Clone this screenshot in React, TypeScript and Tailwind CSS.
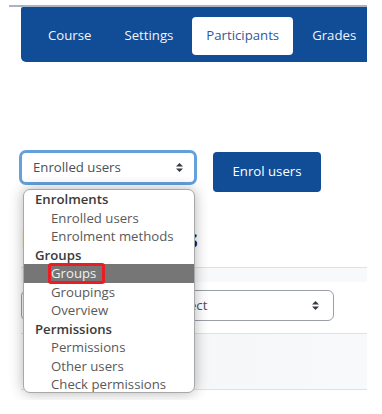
const BLUE = 'bg-[#114c97]';

function UpDown({ className = '' }: { className?: string }) {
  return (
    <svg width="7" height="9" viewBox="0 0 7 9" className={className}>
      <path d="M0 3.6 L3.5 0 L7 3.6 Z" fill="#343a40" />
      <path d="M0 5.4 L3.5 9 L7 5.4 Z" fill="#343a40" />
    </svg>
  );
}

const tabs = ['Course', 'Settings', 'Participants', 'Grades'];

type Item = { label: string; group?: boolean; active?: boolean };

const menu: Item[] = [
  { label: 'Enrolments', group: true },
  { label: 'Enrolled users' },
  { label: 'Enrolment methods' },
  { label: 'Groups', group: true },
  { label: 'Groups', active: true },
  { label: 'Groupings' },
  { label: 'Overview' },
  { label: 'Permissions', group: true },
  { label: 'Permissions' },
  { label: 'Other users' },
  { label: 'Check permissions' },
];

export default function App() {
  return (
    <div
      className="w-[382px] h-[414px] bg-white overflow-hidden"
      style={{ fontFamily: '"Open Sans", "Liberation Sans", sans-serif' }}
    >
      <div className="ml-[9px] mt-[5px] w-[358px] h-[395px] relative overflow-hidden border-t-2 border-[#a9b3c1]">
        {/* Nav */}
        <div className={`ml-[12px] h-[55px] ${BLUE} rounded-bl-[5px] rounded-tl-[2px] flex items-center pl-[13px] pt-[2px] gap-[5px]`}>
          {tabs.map((t) => (
            <div
              key={t}
              className={
                t === 'Participants'
                  ? 'h-[38px] px-[14px] flex items-center rounded-[4px] bg-white text-[#2f5a96] text-[13.2px]'
                  : 'h-[38px] px-[14px] flex items-center text-[#f1f4f9] text-[13.2px]'
              }
            >
              {t}
            </div>
          ))}
        </div>

        {/* Select + button */}
        <div className="flex items-start mt-[88px] ml-[10px]">
          <div className="w-[178px] h-[35px] border-[3px] border-[#64a1dc] rounded-[7px] flex items-center justify-between pl-[11px] pr-[11px] text-[13.2px] text-[#495057]">
            <span>Enrolled users</span>
            <UpDown />
          </div>
          <div className={`ml-[16px] mt-[2px] w-[108px] h-[40px] ${BLUE} rounded-[4px] flex items-center justify-center text-white text-[13.2px]`}>
            Enrol users
          </div>
        </div>

        {/* Page content behind the menu */}
        <h2 className="ml-[12px] mt-[32px] text-[25px] leading-[28px] font-bold text-[#1d2125] whitespace-nowrap">Enrolled users</h2>
        <div className="ml-[12px] mt-[15px] h-[15px] border-t border-[#dee2e6] bg-[#f8f9fa]" />
        <div className="ml-[12px] mt-[8px] w-[313px] h-[31px] border border-[#9aa0a6] rounded-[6px] flex items-center justify-between pl-[149px] pr-[14px] text-[13.2px] text-[#495057]">
          <span>Select</span>
          <UpDown />
        </div>
        <div className="ml-[12px] mt-[12px] h-[57px] border-y border-[#dee2e6] bg-gradient-to-r from-white via-[#f6f7f8] to-[#f8f9fa]" />

        {/* Open select menu */}
        <div className="absolute left-[14px] top-[182px] w-[172px] h-[204px] bg-white border border-[#a8a8a8] rounded-[7px] shadow-[0_0_14px_rgba(0,0,0,0.3)] text-[13.2px] overflow-hidden">
          {menu.map((m, i) => (
            <div
              key={i}
              className={
                m.group
                  ? 'h-[18.5px] leading-[18.5px] pl-[11px] font-semibold text-[#3a3a3a]'
                  : m.active
                    ? 'h-[18.5px] leading-[18.5px] pl-[27px] bg-[#767676] text-[#f0f0f0] flex items-center'
                    : 'h-[18.5px] leading-[18.5px] pl-[27px] text-[#595959]'
              }
            >
              {m.active ? (
                <span className="-ml-[3px] inline-block h-[21px] leading-[15px] border-[3px] border-[#ec1c24] rounded-[3px] pr-[6px]">
                  {m.label}
                </span>
              ) : (
                m.label
              )}
            </div>
          ))}
        </div>
      </div>
    </div>
  );
}
